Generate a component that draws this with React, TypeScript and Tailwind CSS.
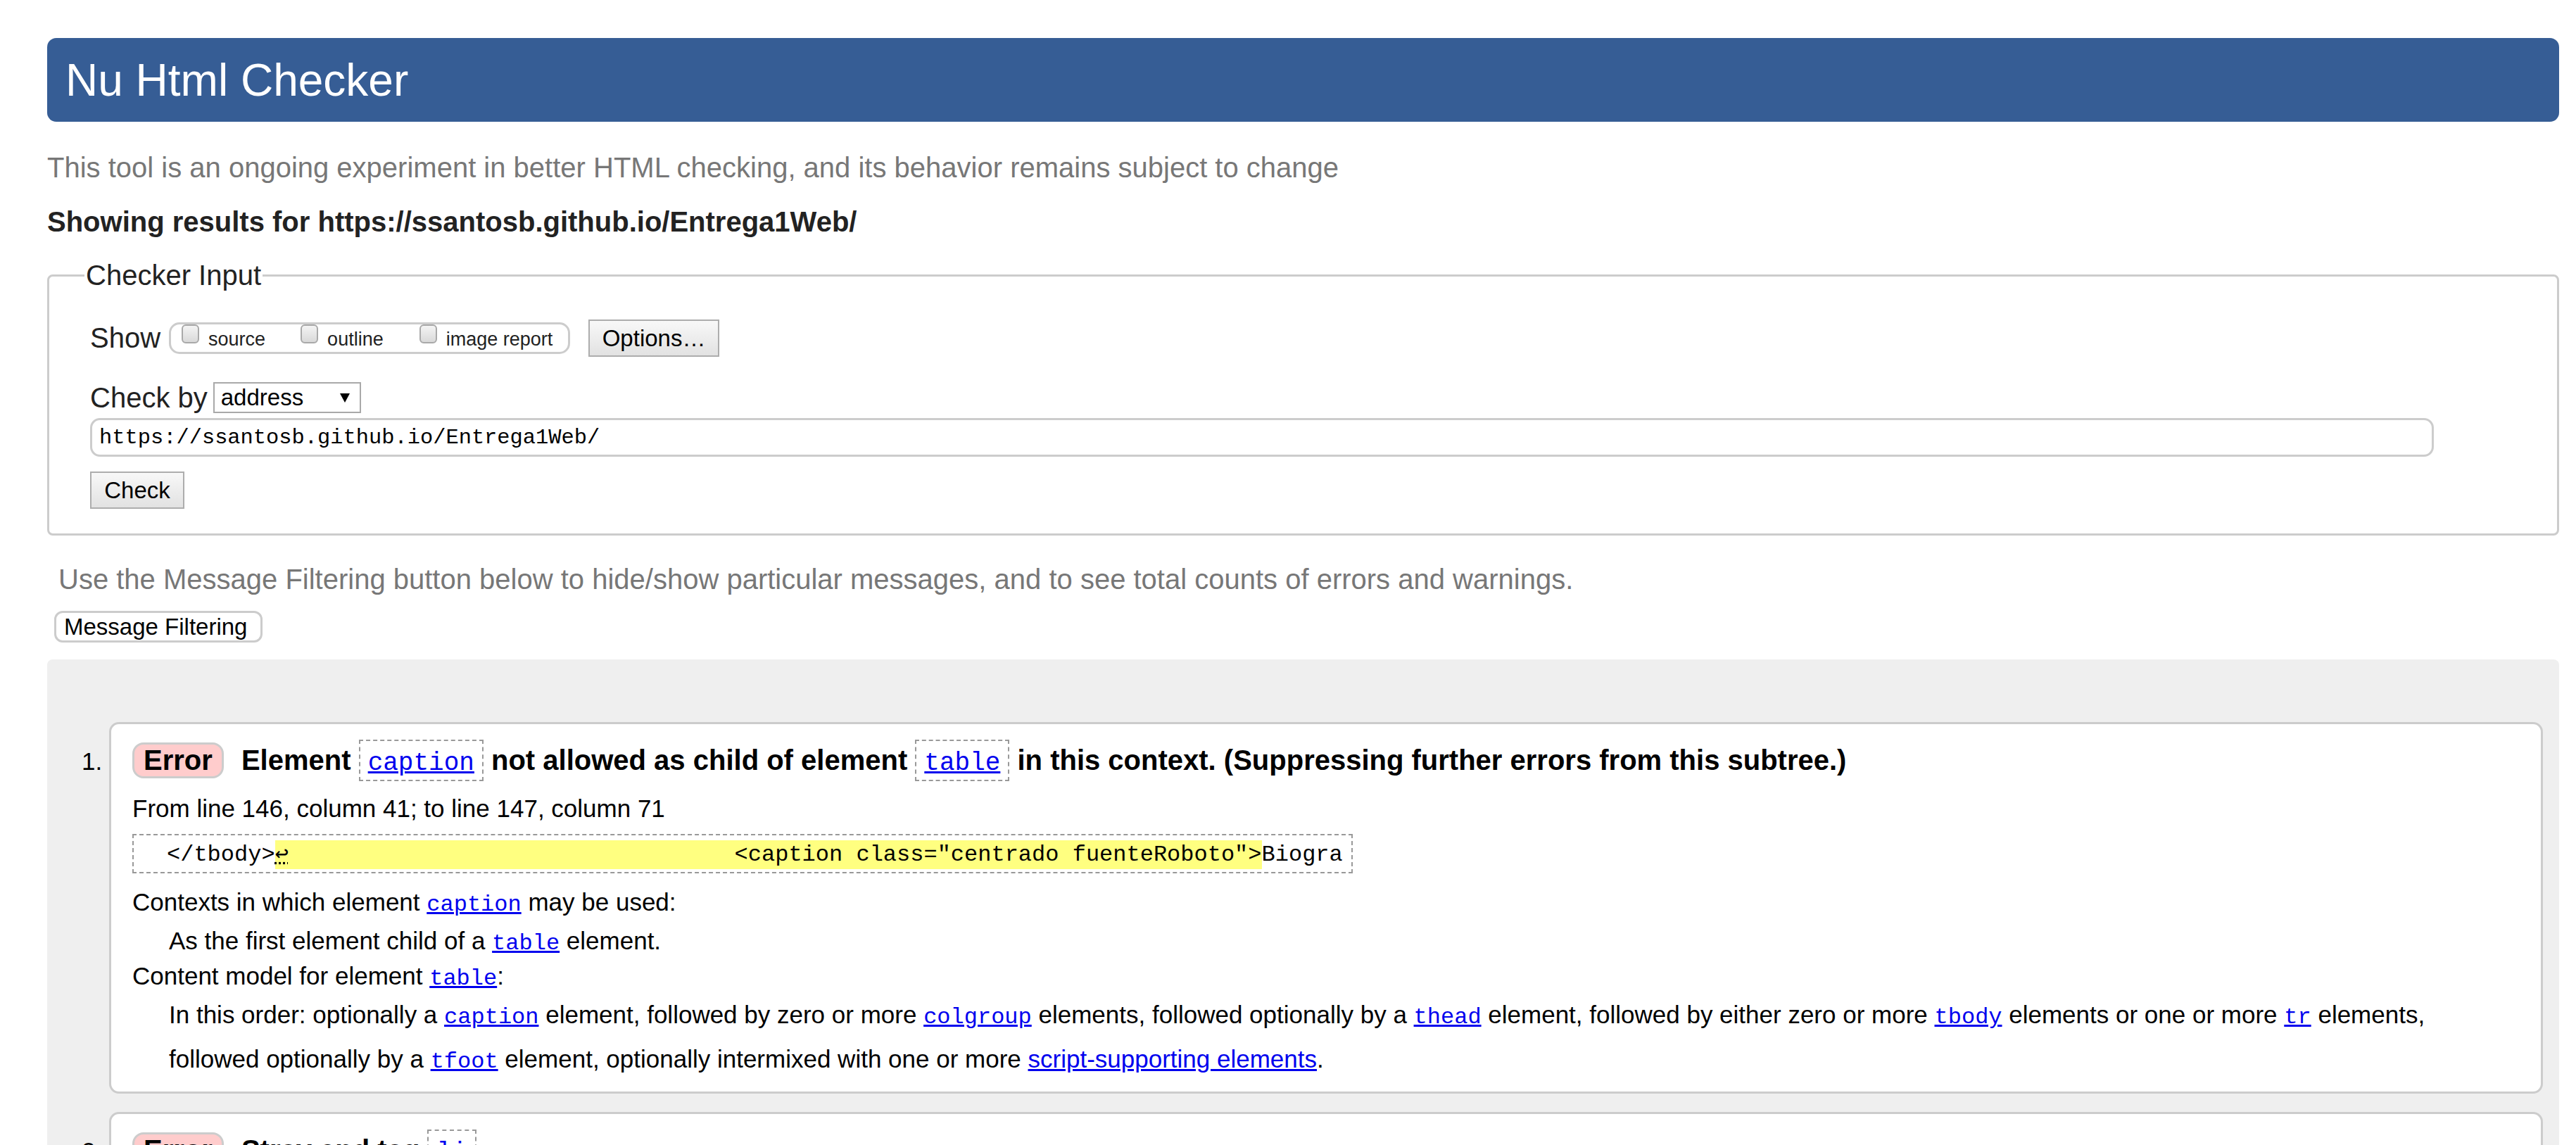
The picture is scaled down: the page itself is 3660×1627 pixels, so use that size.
import type { ReactNode } from 'react';

const mono = "font-['Liberation_Mono','DejaVu_Sans_Mono',monospace]";

function CodeLink({ children, big = false }: { children: ReactNode; big?: boolean }) {
  return (
    <a
      href="#"
      className={`${mono} ${big ? 'text-[36px]' : 'text-[32px]'} font-normal leading-none text-[#0000ee] underline decoration-[3px]`}
    >
      {children}
    </a>
  );
}

function CodeBox({ children }: { children: ReactNode }) {
  return (
    <span className="inline-block border-2 border-dashed border-[#999] px-[11px] py-[5px]">
      <CodeLink big>{children}</CodeLink>
    </span>
  );
}

function Badge() {
  return (
    <strong className="mr-[14px] inline-block rounded-[16px] border-[3px] border-[#ccc] bg-[#ffcccc] px-[13px] font-bold">
      Error
    </strong>
  );
}

function Checkbox() {
  return (
    <span className="block h-[27px] w-[25px] shrink-0 rounded-[6px] border-2 border-[#a9a9a9] bg-linear-to-b from-[#f4f4f4] to-[#d9d9d9]" />
  );
}

export default function App() {
  return (
    <div className="h-[1627px] overflow-hidden bg-white font-['Liberation_Sans',Arial,sans-serif] leading-[normal] text-[#222]">
      <div className="pl-[67px] pr-[24px] pt-[54px]">
        <h1 className="flex h-[119px] items-center rounded-[13px] bg-[#365d95] pl-[26px] text-[64px] font-normal leading-[normal] text-white">
          Nu Html Checker
        </h1>

        <p className="mt-[43px] text-[40px] text-[#777]">
          This tool is an ongoing experiment in better HTML checking, and its behavior remains subject to change
        </p>
        <p className="mt-[32px] text-[40px] font-bold text-[#222]">
          Showing results for https://ssantosb.github.io/Entrega1Web/
        </p>

        <fieldset className="mt-[31px] rounded-[8px] border-[3px] border-[#ccc] px-[50px] pb-[35px]">
          <legend className="px-[2px] text-[40px]">Checker Input</legend>
          <div className="pl-[8px] pt-[40px]">
            <div className="flex h-[53px] items-center">
              <span className="text-[40px]">Show</span>
              <div className="ml-[12px] flex h-[45px] w-[570px] items-start rounded-[15px] border-[3px] border-[#ccc] pl-[15px] text-[27px]">
                <Checkbox />
                <span className="ml-[13px] mt-[6px]">source</span>
                <span className="ml-[50px]">
                  <Checkbox />
                </span>
                <span className="ml-[13px] mt-[6px]">outline</span>
                <span className="ml-[51px]">
                  <Checkbox />
                </span>
                <span className="ml-[13px] mt-[6px]">image report</span>
              </div>
              <button className="ml-[26px] h-[53px] w-[186px] border-2 border-[#adadad] bg-linear-to-b from-[#f8f8f8] to-[#e2e2e2] text-[33px] text-black">
                Options…
              </button>
            </div>

            <div className="mt-[36px] flex h-[44px] items-center">
              <span className="text-[40px]">Check by</span>
              <div className="ml-[8px] flex h-[44px] w-[210px] items-center justify-between border-2 border-[#a9a9a9] bg-white pl-[9px] pr-[14px] text-[33px] text-black">
                <span>address</span>
                <svg width="14" height="14" viewBox="0 0 14 14">
                  <polygon points="0,1 14,1 7,14" fill="#000" />
                </svg>
              </div>
            </div>

            <div
              className={`mt-[7px] flex h-[55px] w-[3330px] items-center rounded-[14px] border-[3px] border-[#ccc] pl-[10px] ${mono} text-[30.4px] text-black`}
            >
              https://ssantosb.github.io/Entrega1Web/
            </div>

            <button className="mt-[21px] h-[53px] w-[134px] border-2 border-[#adadad] bg-linear-to-b from-[#f8f8f8] to-[#e2e2e2] text-[33px] text-black">
              Check
            </button>
          </div>
        </fieldset>

        <p className="mt-[40px] pl-[16px] text-[40px] text-[#777]">
          Use the Message Filtering button below to hide/show particular messages, and to see total counts of errors and warnings.
        </p>
        <button className="ml-[10px] mt-[22px] h-[45px] w-[296px] rounded-[12px] border-[3px] border-[#ccc] bg-white pl-[11px] text-left text-[33px] text-black">
          Message Filtering
        </button>

        <div className="mt-[24px] rounded-t-[8px] bg-[#efefef] pb-[40px] pl-[88px] pr-[23px] pt-[89px]">
          <ol className="list-decimal">
            <li className="rounded-[14px] border-[3px] border-[#ccc] bg-white px-[30px] pb-[15px] pt-[22px] text-[35px] text-black">
              <p className="whitespace-nowrap text-[40px] font-bold">
                <Badge />{' '}
                Element <CodeBox>caption</CodeBox> not allowed as child of element <CodeBox>table</CodeBox> in this
                context. (Suppressing further errors from this subtree.)
              </p>
              <p className="mt-[19px]">From line 146, column 41; to line 147, column 71</p>
              <div
                className={`mt-[16px] w-fit whitespace-pre border-2 border-dashed border-[#999] py-[6px] pl-[47px] pr-[12px] ${mono} text-[32px]`}
              >
                {'</tbody>'}
                <mark className="bg-[#ffff80] py-[2px] text-black">
                  <span className="font-['DejaVu_Sans_Mono',monospace] underline decoration-dotted">↩</span>
                  {'                                 <caption class="centrado fuenteRoboto">'}
                </mark>
                {'Biogra'}
              </div>
              <p className="mt-[21px]">
                Contexts in which element <CodeLink>caption</CodeLink> may be used:
              </p>
              <p className="mt-[15px] pl-[52px]">
                As the first element child of a <CodeLink>table</CodeLink> element.
              </p>
              <p className="mt-[10px]">
                Content model for element <CodeLink>table</CodeLink>:
              </p>
              <p className="mt-[3px] whitespace-nowrap pl-[52px] leading-[63px]">
                In this order: optionally a <CodeLink>caption</CodeLink> element, followed by zero or more{' '}
                <CodeLink>colgroup</CodeLink> elements, followed optionally by a <CodeLink>thead</CodeLink> element,
                followed by either zero or more <CodeLink>tbody</CodeLink> elements or one or more{' '}
                <CodeLink>tr</CodeLink> elements,
                <br />
                followed optionally by a <CodeLink>tfoot</CodeLink> element, optionally intermixed with one or more{' '}
                <a href="#" className="text-[#0000ee] underline">
                  script-supporting elements
                </a>
                .
              </p>
            </li>

            <li className="mt-[26px] rounded-[14px] border-[3px] border-[#ccc] bg-white px-[30px] pb-[15px] pt-[22px] text-[35px] text-black">
              <p className="whitespace-nowrap text-[40px] font-bold">
                <Badge />{' '}
                Stray end tag <CodeBox>li</CodeBox>.
              </p>
              <p className="mt-[19px]">From line 152, column 17; to line 152, column 21</p>
              <div
                className={`mt-[16px] w-fit whitespace-pre border-2 border-dashed border-[#999] py-[6px] pl-[47px] pr-[12px] ${mono} text-[32px]`}
              >
                {'</a>'}
                <mark className="bg-[#ffff80] py-[2px] text-black">{'</li>'}</mark>
                {'↩'}
              </div>
            </li>
          </ol>
        </div>
      </div>
    </div>
  );
}
